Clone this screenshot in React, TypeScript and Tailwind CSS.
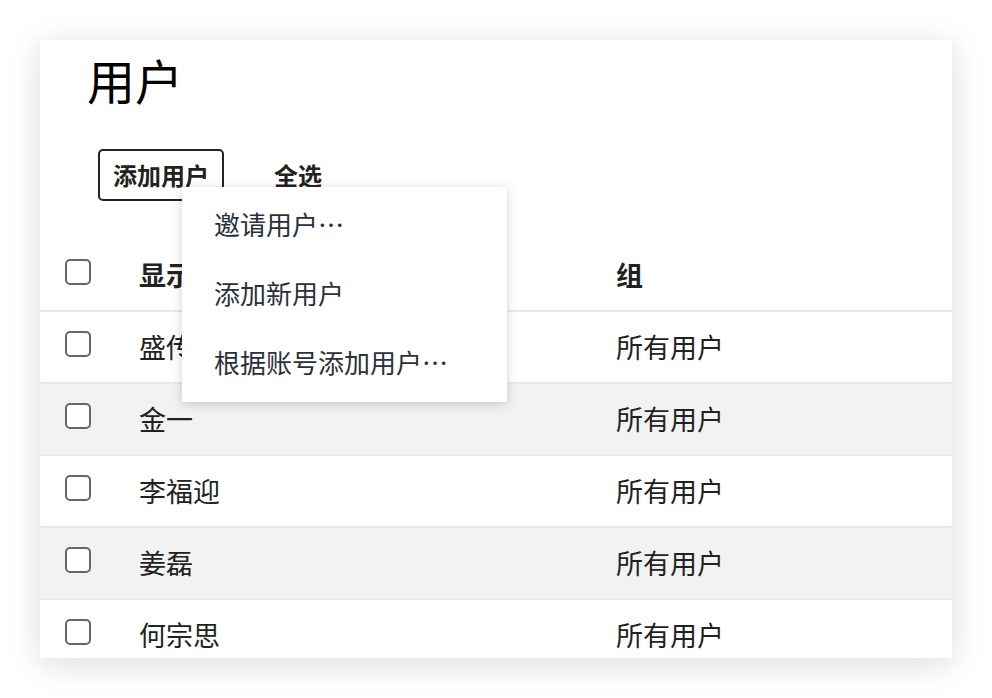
import React from "react";

const rows = [
  { name: "盛传伟", group: "所有用户", gray: false },
  { name: "金一", group: "所有用户", gray: true },
  { name: "李福迎", group: "所有用户", gray: false },
  { name: "姜磊", group: "所有用户", gray: true },
  { name: "何宗思", group: "所有用户", gray: false },
];

function Checkbox() {
  return <div className="w-[26px] h-[26px] rounded-[5px] border-2 border-[#666666] bg-white mb-[6px] shrink-0" />;
}

export default function App() {
  return (
    <div
      className="w-[992px] h-[698px] bg-white overflow-hidden pt-[40px] pl-[40px]"
      style={{ fontFamily: '"Noto Sans CJK SC", "Noto Sans", sans-serif' }}
    >
      <div className="relative w-[912px] h-[618px] bg-white overflow-hidden shadow-[0_6px_32px_rgba(0,0,0,0.14)]">
        <div className="pl-[47px] pt-[14px] text-[48px] leading-[50px] text-black">用户</div>
        <div className="flex items-center pl-[58px] mt-[45px] h-[52px]">
          <div className="h-[52px] px-[13px] border-2 border-[#222222] rounded-[5px] flex items-center text-[24px] font-bold text-[#222222]">
            添加用户
          </div>
          <div className="ml-[50px] text-[24px] font-bold text-[#222222]">全选</div>
        </div>
        <div className="mt-[39px]">
          <div className="flex items-center h-[72px] border-b-2 border-[#e6e8f1] pl-[25px]">
            <Checkbox />
            <div className="ml-[48px] w-[477px] text-[27px] font-bold text-[#222222]">显示名称</div>
            <div className="text-[27px] font-bold text-[#222222]">组</div>
          </div>
          {rows.map((r, i) => (
            <div
              key={i}
              className={`flex items-center h-[72px] border-b-2 border-[#e6e8f1] pl-[25px] ${r.gray ? "bg-[#f2f2f2]" : "bg-white"}`}
            >
              <Checkbox />
              <div className="ml-[48px] w-[477px] text-[27px] text-[#222222]">{r.name}</div>
              <div className="text-[27px] text-[#222222]">{r.group}</div>
            </div>
          ))}
        </div>
        <div className="absolute left-[142px] top-[147px] w-[325px] h-[215px] bg-white shadow-[0_2px_10px_rgba(0,0,0,0.18)] pt-[2px]">
          {["邀请用户…", "添加新用户", "根据账号添加用户…"].map((t) => (
            <div key={t} className="h-[69px] flex items-center pl-[32px] text-[26px] text-[#2b303b]">
              {t}
            </div>
          ))}
        </div>
      </div>
    </div>
  );
}
